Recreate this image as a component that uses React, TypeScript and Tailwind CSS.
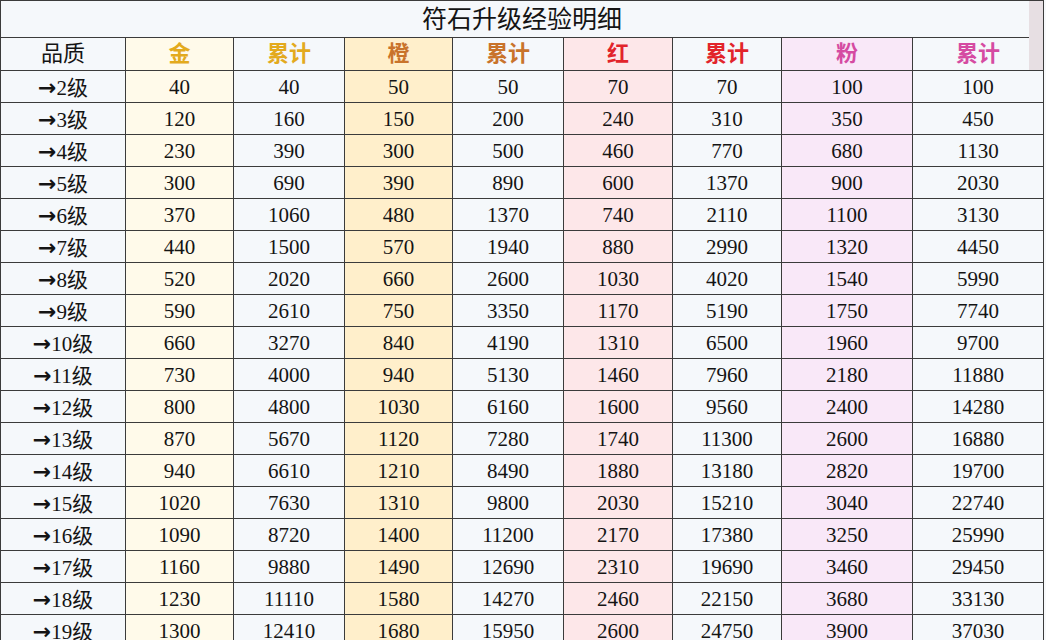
const levels = Array.from({ length: 18 }, (_, i) => i + 2)

const gold = [40, 120, 230, 300, 370, 440, 520, 590, 660, 730, 800, 870, 940, 1020, 1090, 1160, 1230, 1300]
const orange = [50, 150, 300, 390, 480, 570, 660, 750, 840, 940, 1030, 1120, 1210, 1310, 1400, 1490, 1580, 1680]
const red = [70, 240, 460, 600, 740, 880, 1030, 1170, 1310, 1460, 1600, 1740, 1880, 2030, 2170, 2310, 2460, 2600]
const pink = [100, 350, 680, 900, 1100, 1320, 1540, 1750, 1960, 2180, 2400, 2600, 2820, 3040, 3250, 3460, 3680, 3900]

// running totals for the 累计 columns
const cumulative = (list: number[]) => {
  let sum = 0
  return list.map((v) => (sum += v))
}

const groups = [
  { name: "金", values: gold, text: "text-[#e3aa1e]", bg: "bg-[#fffaea]" },
  { name: "橙", values: orange, text: "text-[#c9732b]", bg: "bg-[#ffefcb]" },
  { name: "红", values: red, text: "text-[#e2242b]", bg: "bg-[#fde7e9]" },
  { name: "粉", values: pink, text: "text-[#d54ba2]", bg: "bg-[#f9e8f8]" },
]

const widths = [125, 108, 111, 108, 111, 109, 109, 131, 131]

const cell = "border border-[#3b3b3b] text-center align-middle p-0"

export default function App() {
  const totals = groups.map((g) => cumulative(g.values))

  return (
    <div
      className="relative w-[1046px] h-[640px] overflow-hidden bg-[#f7f9fb] text-[#141414]"
      style={{ fontFamily: '"Liberation Serif", "Noto Sans CJK SC", serif' }}
    >
      <table className="table-fixed border-collapse w-[1044px] bg-[#f5f8fb]">
        <colgroup>
          {widths.map((w, i) => (
            <col key={i} style={{ width: w }} />
          ))}
        </colgroup>
        <tbody>
          <tr className="h-[37px]">
            <td colSpan={9} className={`${cell} text-[25px] leading-none`}>
              符石升级经验明细
            </td>
          </tr>
          <tr className="h-[33px]">
            <td className={`${cell} text-[22px] leading-none`}>品质</td>
            {groups.map((g) => [
              <td key={g.name} className={`${cell} ${g.bg} ${g.text} text-[22px] font-bold leading-none`}>
                {g.name}
              </td>,
              <td key={g.name + "sum"} className={`${cell} ${g.text} text-[22px] font-bold leading-none`}>
                累计
              </td>,
            ])}
          </tr>
          {levels.map((lv, r) => (
            <tr key={lv} className="h-[32px]">
              <td className={`${cell} text-[21px] leading-none pt-[2px]`}>
                <span className="font-['DejaVu_Sans'] text-[22px] font-bold">→</span>
                {lv}级
              </td>
              {groups.map((g, gi) => [
                <td key={g.name} className={`${cell} ${g.bg} text-[21px] leading-none pt-[2px]`}>
                  {g.values[r]}
                </td>,
                <td key={g.name + "sum"} className={`${cell} text-[21px] leading-none pt-[2px]`}>
                  {totals[gi][r]}
                </td>,
              ])}
            </tr>
          ))}
        </tbody>
      </table>

      {/* scrollbar strip at right edge */}
      <div className="absolute top-px left-[1029px] w-[14px] h-[69px] bg-[#e7dfe3]" />
    </div>
  )
}
